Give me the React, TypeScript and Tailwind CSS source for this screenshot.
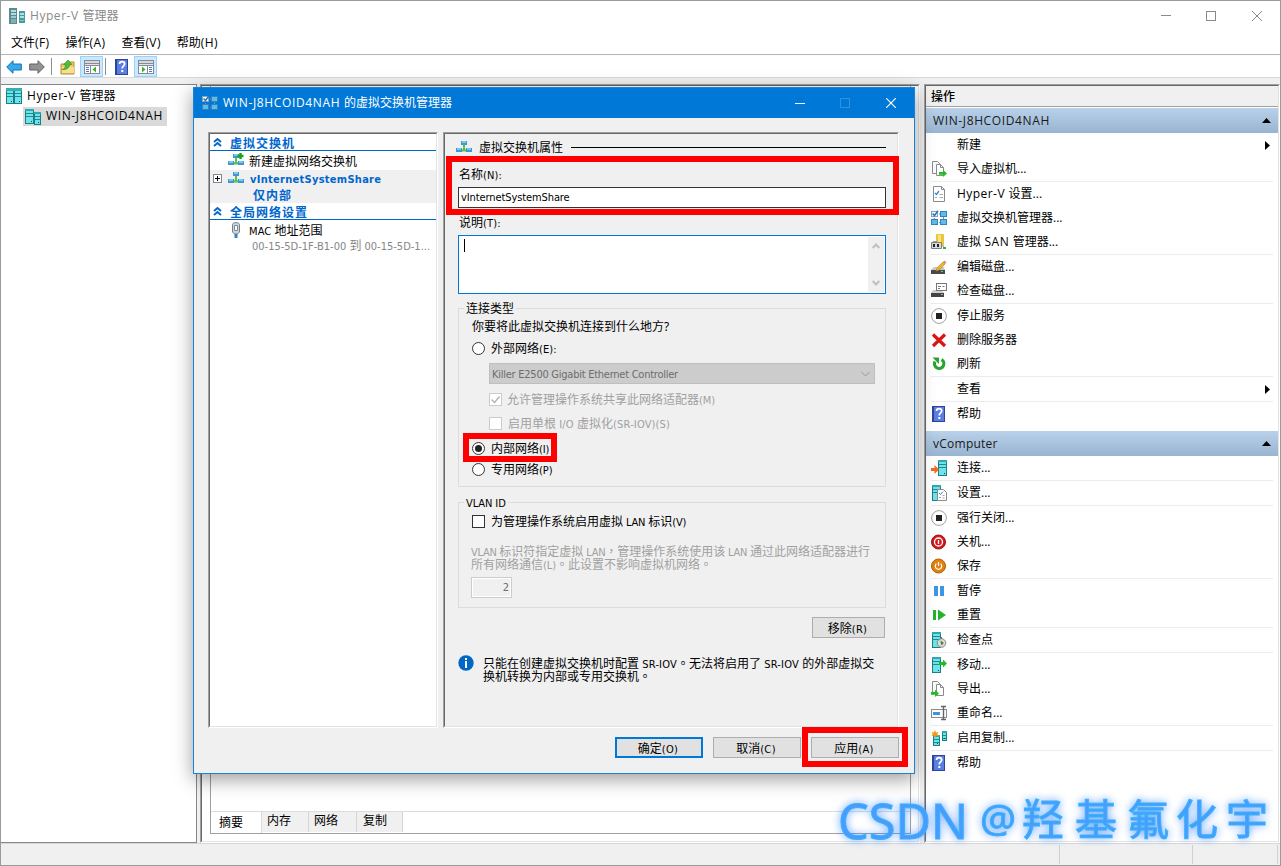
import type { ReactNode } from "react";

import clsx from "clsx";

interface TxtProps {
  children: string;
  className?: string;
  latin?: string;
}

const SEGOE = "font-['Open_Sans','Noto_Sans_CJK_SC',sans-serif] text-[12px]";
const TAHOMA = "font-['Noto_Sans','Noto_Sans_CJK_SC',sans-serif] text-[12px]";
const TAHOMA_LATIN = "font-['DejaVu_Sans_Condensed','DejaVu_Sans',sans-serif] font-stretch-condensed text-[11px]";

// Latin and CJK runs use different metrics, so each run is set on its own.
function Txt({ children, className, latin = "tracking-[0.45px]" }: TxtProps) {
  const runs = children.split(/([\x20-\x7e]+|[，。])/).filter(Boolean);
  return (
    <span className={clsx("whitespace-pre", className)}>
      {runs.map((run, i) => (
        <span
          key={i}
          className={clsx(
            /[A-Za-z0-9]/.test(run) && latin,
            /[，。]/.test(run) && "font-['Noto_Sans_CJK_TC',sans-serif]",
          )}
        >
          {run}
        </span>
      ))}
    </span>
  );
}

function DTxt({ children, className, latin = "tracking-[-0.1px]" }: TxtProps) {
  return (
    <Txt className={className} latin={clsx(TAHOMA_LATIN, latin)}>
      {children}
    </Txt>
  );
}

function Icon({ children, className }: { children: ReactNode; className?: string }) {
  return (
    <svg viewBox="0 0 16 16" className={clsx("h-4 w-4 shrink-0", className)} aria-hidden="true">
      {children}
    </svg>
  );
}

/* ---------- icons ---------- */

function ServerShape({ x, y, w, h }: { x: number; y: number; w: number; h: number }) {
  return (
    <g shapeRendering="crispEdges">
      <rect x={x} y={y} width={w} height={h} fill="#1d7f86" />
      <rect x={x + 1} y={y + 2} width={w - 2} height={h - 3} fill="#6fe3ea" />
      <rect x={x} y={y} width={w} height={2} fill="#2fa9b0" />
      <rect x={x + 1} y={y + 4} width={w - 2} height={1} fill="#1d8d95" />
      <rect x={x + 1} y={y + 7} width={w - 2} height={1} fill="#1d8d95" />
      <rect x={x + w - 3} y={y + h - 3} width={1} height={1} fill="#0c4f55" />
    </g>
  );
}

function HyperVIcon() {
  return (
    <Icon>
      <g shapeRendering="crispEdges">
        <rect x="0" y="0" width="8" height="16" fill="#5b8a90" />
        <rect x="2" y="2" width="5" height="2" fill="#b5dcdf" />
        <rect x="2" y="5" width="5" height="2" fill="#b5dcdf" />
        <rect x="2" y="8" width="5" height="2" fill="#9dcace" />
        <rect x="2" y="11" width="5" height="4" fill="#7fb0b5" />
        <rect x="10" y="3" width="6" height="12" fill="#4c9aa1" />
        <rect x="11" y="5" width="4" height="2" fill="#a9e3e6" />
        <rect x="11" y="8" width="4" height="2" fill="#a9e3e6" />
        <rect x="11" y="12" width="4" height="1" fill="#7fc4c9" />
      </g>
    </Icon>
  );
}

function RackIcon() {
  return (
    <Icon>
      <ServerShape x={0} y={1} w={8} h={15} />
      <ServerShape x={8} y={1} w={8} h={15} />
      <rect x="0" y="0" width="16" height="3" fill="#37aeb4" />
    </Icon>
  );
}

function HostIcon() {
  return (
    <Icon>
      <ServerShape x={0} y={0} w={9} h={15} />
      <ServerShape x={9} y={3} w={7} h={13} />
    </Icon>
  );
}

function ArrowIcon({ back }: { back?: boolean }) {
  return (
    <Icon>
      {back ? (
        <path d="M.7 8 7 1.700V5h8.300v6H7v3.300z" fill="#35aae8" stroke="#1b6fb5" />
      ) : (
        <path d="M15.300 8 9 1.700V5H.7v6H9v3.300z" fill="#929292" stroke="#626262" />
      )}
    </Icon>
  );
}

function FolderUpIcon() {
  return (
    <Icon>
      <path d="M1 5h6l1-2h6v12H1z" fill="#edcb68" stroke="#b88d2c" />
      <path d="M2 8h12v6H2z" fill="#f6df93" />
      <path d="M2 10.500c2.500-.5 3.500-2.500 3.500-5H3.500L8 1l4 4.500H9.500c0 3.500-3 5.500-7.500 5z" fill="#4fbe35" stroke="#2f8c22" strokeWidth=".6" />
    </Icon>
  );
}

function PaneIcon({ flip }: { flip?: boolean }) {
  return (
    <Icon>
      <g shapeRendering="crispEdges">
        <rect x="0" y="1" width="16" height="14" fill="#878c94" />
        <rect x="1" y="2" width="14" height="2" fill="#d5d9df" />
        <rect x="1" y="5" width="14" height="1" fill="#dfe3e9" />
        <rect x="1" y="7" width="14" height="7" fill="#fff" />
        <rect x={flip ? 9 : 6} y="7" width="1" height="7" fill="#878c94" />
        <rect x={flip ? 11 : 2} y="8" width="3" height="1" fill="#4d7bbd" />
        <rect x={flip ? 11 : 2} y="10" width="3" height="1" fill="#4d7bbd" />
        <rect x={flip ? 11 : 2} y="12" width="3" height="1" fill="#4d7bbd" />
      </g>
      {flip ? <path d="M4 7.500v6L7.500 10.500z" fill="#3faf2b" /> : <path d="M12 7.500v6L8.500 10.500z" fill="#3faf2b" />}
    </Icon>
  );
}

function HelpIcon() {
  return (
    <Icon>
      <rect x="1" y="0" width="13" height="16" fill="#2c449f" />
      <rect x="3" y="1" width="10" height="14" fill="#5b7fe0" />
      <path d="M5.500 5c0-3.300 5.200-3.300 5.200 0 0 2-2.500 2-2.500 4.500" fill="none" stroke="#fff" strokeWidth="1.700" />
      <rect x="7.300" y="11" width="2" height="2" fill="#fff" />
    </Icon>
  );
}

function SwitchManagerIcon() {
  return (
    <Icon>
      <path d="M8 4h3M3.500 8v4M8 12.500h3M12.500 7v4" stroke="#7e8c96" fill="none" />
      <rect x=".5" y="1.500" width="6" height="5" fill="#fff" stroke="#8ca2b0" />
      <path d="M1.500 3.500 3.500 5.500 7 .8" fill="none" stroke="#2277c8" strokeWidth="1.500" />
      <rect x="9.500" y="1.500" width="6" height="5" fill="#5bbcf0" stroke="#3583b5" />
      <rect x=".5" y="9.500" width="6" height="5" fill="#5bbcf0" stroke="#3583b5" />
      <rect x="9.500" y="9.500" width="6" height="5" fill="#5bbcf0" stroke="#3583b5" />
    </Icon>
  );
}

function SwitchIcon({ plus }: { plus?: boolean }) {
  return (
    <Icon>
      <path d="M7 5h2v4l3 1v1.500H4V10l3-1z" fill="#5cc04c" />
      <rect x="5" y="1" width="6" height="4" fill="#3f97d2" />
      <rect x="6" y="1" width="4" height="2" fill="#7cc8f2" />
      <rect x="0" y="8" width="6" height="4" fill="#3f97d2" />
      <rect x="1" y="8" width="4" height="2" fill="#7cc8f2" />
      <rect x="10" y="8" width="6" height="4" fill="#3f97d2" />
      <rect x="11" y="8" width="4" height="2" fill="#7cc8f2" />
      {plus && <path d="M12.500 0v6M9.500 3h6" stroke="#14a514" strokeWidth="2.400" />}
    </Icon>
  );
}

function NicIcon() {
  return (
    <Icon>
      <path d="M4.500 10V2.500c0-2.500 7-2.500 7 0V10l-2 2h-3z" fill="#cdd5dc" stroke="#75818c" />
      <path d="M6.500 3.500h3v5h-3z" fill="#fff" stroke="#7d8893" />
      <rect x="6.500" y="12" width="3" height="4" fill="#2f86c5" />
    </Icon>
  );
}

function PagesIcon({ out }: { out?: boolean }) {
  return (
    <Icon>
      <path d="M1.500.5h5l2.500 2.500v9.500H1.500z" fill="#fafafa" stroke="#8b8b8b" />
      <path d="M5.500 3.500h4l3 3v8h-7z" fill="#fff" stroke="#8b8b8b" />
      <path d="M9.500 3.500v3h3" fill="none" stroke="#8b8b8b" />
      {out ? (
        <path d="M0 11h4V8.700L8 12.500 4 16v-2.300H0z" fill="#22bd22" />
      ) : (
        <path d="M8 11h4V8.700L16 12.500 12 16v-2.300H8z" fill="#22bd22" />
      )}
    </Icon>
  );
}

function SettingsPageIcon() {
  return (
    <Icon>
      <path d="M2.500.5h8l3 3v12h-11z" fill="#fff" stroke="#8b8b8b" />
      <path d="M10.500.5v3h3" fill="none" stroke="#8b8b8b" />
      <path d="m4 7 1.500 1.500L8 5" fill="none" stroke="#3187d1" strokeWidth="1.300" />
      <path d="M8.500 8.500H12M8.500 11.500H12M4 11.500h2" stroke="#a8a8a8" />
    </Icon>
  );
}

function SanIcon() {
  return (
    <Icon>
      <rect x="5" y="0" width="8" height="12" rx="1" fill="#e9c73b" />
      <rect x="7" y="1" width="3" height="10" fill="#f7e383" />
      <path d="M2 7.500h4M4 7v2M11 11.500l4 3" stroke="#9a9a9a" />
      <rect x="0" y="8" width="11" height="7" rx="1" fill="#808080" />
      <rect x="1" y="9" width="9" height="5" fill="#d9d9d9" />
      <rect x="2" y="10" width="2" height="3" fill="#222" />
      <rect x="6" y="10" width="2" height="3" fill="#222" />
      <rect x="12" y="13" width="3" height="2" fill="#36ae36" />
    </Icon>
  );
}

function EditDiskIcon() {
  return (
    <Icon>
      <path d="M3 8h10l1 3H0z" fill="#c8c8c8" />
      <rect x="0" y="11" width="14" height="4" fill="#4a4a4a" />
      <rect x="10" y="12" width="2" height="1" fill="#5fd35f" />
      <path d="m5 12 1-3 6-6 2 2-6 6z" fill="#f0b429" stroke="#b27b14" strokeWidth=".6" />
      <path d="m12 3 1.500-1.500 2 2L14 5z" fill="#e58282" />
    </Icon>
  );
}

function InspectDiskIcon() {
  return (
    <Icon>
      <path d="M2 7h9l2 3H0z" fill="#cfcfcf" />
      <rect x="0" y="10" width="13" height="4" fill="#444" />
      <rect x="10" y="11" width="2" height="1" fill="#5fd35f" />
      <rect x="5.500" y=".5" width="10" height="7" fill="#fff" stroke="#777" />
      <path d="M7 3.500h3M11.500 3.500h2M7 5.500h2" stroke="#777" />
    </Icon>
  );
}

function StopIcon() {
  return (
    <Icon>
      <circle cx="8" cy="8" r="7.400" fill="#fff" stroke="#a0a0a0" />
      <rect x="5" y="5" width="6" height="6" fill="#222" />
    </Icon>
  );
}

function DeleteIcon() {
  return (
    <Icon>
      <path d="m2 2.500 12 11.500M14 2.500 2 14" stroke="#dc1414" strokeWidth="3.200" />
    </Icon>
  );
}

function RefreshIcon() {
  return (
    <Icon>
      <path d="M10.500 3.600A4.700 4.700 0 1 1 4 5.500" fill="none" stroke="#27a52f" strokeWidth="3.200" />
      <path d="M1.500 1.500h6.500V8z" fill="#27a52f" />
    </Icon>
  );
}

function ConnectIcon() {
  return (
    <Icon>
      <ServerShape x={7} y={0} w={9} h={16} />
      <path d="M0 8h3.500V5L8 9.500 3.500 14v-3H0z" fill="#f26a1b" />
    </Icon>
  );
}

function VmSettingsIcon() {
  return (
    <Icon>
      <ServerShape x={1} y={0} w={9} h={16} />
      <path d="M6.500 4.500h6l3 3v8h-9z" fill="#fff" stroke="#8b8b8b" />
      <path d="m8 8 1.500 1.500L12 6.500" fill="none" stroke="#3187d1" />
      <path d="M8 12.500h2M11.500 10.500h2M11.500 13h2" stroke="#a8a8a8" />
    </Icon>
  );
}

function ShutdownIcon() {
  return (
    <Icon>
      <circle cx="7.500" cy="8" r="7" fill="#d41a1a" stroke="#9b1010" />
      <circle cx="7.500" cy="8" r="4" fill="none" stroke="#fff" strokeWidth="1.300" />
      <path d="M7.500 6v4" stroke="#fff" strokeWidth="1.300" />
    </Icon>
  );
}

function SaveIcon() {
  return (
    <Icon>
      <circle cx="7.500" cy="8" r="7" fill="#e0820f" stroke="#ac600a" />
      <path d="M5.300 5.800a3.200 3.200 0 1 0 4.400 0M7.500 4v4" fill="none" stroke="#fff" strokeWidth="1.200" />
    </Icon>
  );
}

function PauseIcon() {
  return (
    <Icon>
      <rect x="3" y="3" width="4" height="10" fill="#3b97e3" />
      <rect x="9" y="3" width="4" height="10" fill="#3b97e3" />
    </Icon>
  );
}

function ResetIcon() {
  return (
    <Icon>
      <rect x="2" y="3" width="3" height="10" fill="#22b52c" />
      <path d="m7 2.500 8 5.500-8 5.500z" fill="#22b52c" />
    </Icon>
  );
}

function CheckpointIcon() {
  return (
    <Icon>
      <ServerShape x={1} y={0} w={9} h={16} />
      <circle cx="10.500" cy="11" r="4.300" fill="#d8d8d8" stroke="#8a8a8a" />
      <path d="M10.500 5v2" stroke="#777" />
      <path d="M9.500 8.500 13 11l-3 1.500z" fill="#2a9a34" />
      <circle cx="11" cy="12" r=".8" fill="#c22" />
    </Icon>
  );
}

function MoveIcon() {
  return (
    <Icon>
      <ServerShape x={1} y={0} w={9} h={16} />
      <path d="M8 5h4V2.500L16 6.500 12 10.500V8H8z" fill="#22bd22" />
    </Icon>
  );
}

function RenameIcon() {
  return (
    <Icon>
      <rect x=".5" y="4.500" width="15" height="8" fill="#fff" stroke="#8b8b8b" />
      <rect x="2" y="7" width="7" height="3" fill="#3b97e3" />
      <path d="M12.500 1v14M10 1.500h5M10 14.500h5" stroke="#666" strokeWidth="1.400" fill="none" />
    </Icon>
  );
}

function ReplicateIcon() {
  return (
    <Icon>
      <ServerShape x={2} y={5} w={7} h={11} />
      <ServerShape x={11} y={1} w={5} h={10} />
      <path d="m4 0 1 2.500L7.500 2 6.300 4l1.500 2-2.600-.2L4 8l-1-2.400L.5 6l1.300-2L.5 2 3 2.500z" fill="#f39c12" />
    </Icon>
  );
}

/* ---------- actions pane ---------- */

interface Action {
  label: string;
  icon?: ReactNode;
  submenu?: boolean;
}

const HOST_ACTIONS: Action[][] = [
  [
    { label: "新建", submenu: true },
    { label: "导入虚拟机...", icon: <PagesIcon /> },
  ],
  [
    { label: "Hyper-V 设置...", icon: <SettingsPageIcon /> },
    { label: "虚拟交换机管理器...", icon: <SwitchManagerIcon /> },
    { label: "虚拟 SAN 管理器...", icon: <SanIcon /> },
  ],
  [
    { label: "编辑磁盘...", icon: <EditDiskIcon /> },
    { label: "检查磁盘...", icon: <InspectDiskIcon /> },
  ],
  [
    { label: "停止服务", icon: <StopIcon /> },
    { label: "删除服务器", icon: <DeleteIcon /> },
    { label: "刷新", icon: <RefreshIcon /> },
  ],
  [{ label: "查看", submenu: true }],
  [{ label: "帮助", icon: <HelpIcon /> }],
];

const VM_ACTIONS: Action[][] = [
  [{ label: "连接...", icon: <ConnectIcon /> }],
  [{ label: "设置...", icon: <VmSettingsIcon /> }],
  [
    { label: "强行关闭...", icon: <StopIcon /> },
    { label: "关机...", icon: <ShutdownIcon /> },
    { label: "保存", icon: <SaveIcon /> },
  ],
  [
    { label: "暂停", icon: <PauseIcon /> },
    { label: "重置", icon: <ResetIcon /> },
  ],
  [{ label: "检查点", icon: <CheckpointIcon /> }],
  [
    { label: "移动...", icon: <MoveIcon /> },
    { label: "导出...", icon: <PagesIcon out /> },
    { label: "重命名...", icon: <RenameIcon /> },
  ],
  [{ label: "启用复制...", icon: <ReplicateIcon /> }],
  [{ label: "帮助", icon: <HelpIcon /> }],
];

function ActionBand({ title, latin }: { title: string; latin: string }) {
  return (
    <div className="flex h-[25px] items-center justify-between bg-linear-to-b from-[#b9d1ea] to-[#99b4d1] pr-[7px] pl-[7px]">
      <Txt latin={latin} className="text-[#1a1a1a]">{title}</Txt>
      <svg viewBox="0 0 9 5" className="h-[5px] w-[9px]">
        <path d="M4.500 0 9 5H0z" />
      </svg>
    </div>
  );
}

function ActionGroups({ groups }: { groups: Action[][] }) {
  return (
    <>
      {groups.map((group, i) => (
        <div key={i}>
          {i > 0 && <div className="mr-[5px] ml-[5px] h-px bg-[#ececec]" />}
          {group.map((action) => (
            <div key={action.label} className="flex h-6 items-center pr-2 pl-[5px]">
              <div className="mr-[10px] h-4 w-4">{action.icon}</div>
              <Txt className="flex-1">{action.label}</Txt>
              {action.submenu && (
                <svg viewBox="0 0 5 9" className="h-[9px] w-[5px]">
                  <path d="M0 0 5 4.500 0 9z" />
                </svg>
              )}
            </div>
          ))}
        </div>
      ))}
    </>
  );
}

/* ---------- dialog ---------- */

function Radio({ checked }: { checked?: boolean }) {
  return (
    <span className="flex h-[13px] w-[13px] shrink-0 items-center justify-center rounded-full border border-[#333] bg-white">
      {checked && <span className="h-[7px] w-[7px] rounded-full bg-[#222]" />}
    </span>
  );
}

function Check({ disabled, checked }: { disabled?: boolean; checked?: boolean }) {
  return (
    <span
      className={clsx(
        "flex h-[13px] w-[13px] shrink-0 items-center justify-center border bg-white",
        disabled ? "border-[#ccc]" : "border-[#333]",
      )}
    >
      {checked && (
        <svg viewBox="0 0 11 11" className="h-[11px] w-[11px]">
          <path d="m1.500 5.500 3 3 5-6" fill="none" stroke="#b0b0b0" strokeWidth="1.300" />
        </svg>
      )}
    </span>
  );
}

function DialogButton({ label, primary, className }: { label: string; primary?: boolean; className?: string }) {
  return (
    <button
      type="button"
      className={clsx(
        "flex h-[21px] items-center justify-center bg-[#e1e1e1] pr-[2px] leading-none",
        primary ? "border-2 border-[#0078d7]" : "border border-[#adadad]",
        className,
      )}
    >
      <DTxt className="pt-[2px]" latin="tracking-[0.35px]">{label}</DTxt>
    </button>
  );
}

function TreeHeader({ title }: { title: string }) {
  return (
    <div className="flex h-[17px] items-center border-b border-[#0066cc] pl-[2px] font-bold text-[#0066cc]">
      <svg viewBox="0 0 9 9" className="mr-[8px] ml-px h-[9px] w-[9px]">
        <path d="m1 4 3.500-3L8 4M1 8l3.500-3L8 8" fill="none" stroke="#0066cc" strokeWidth="1.900" />
      </svg>
      <DTxt className="pt-[3px] tracking-[1px]">{title}</DTxt>
    </div>
  );
}

function SwitchTree() {
  return (
    <div className="h-[596px] w-[230px] border border-t-[#a0a0a0] border-r-white border-b-white border-l-[#a0a0a0]">
      <div className="h-full overflow-hidden border border-t-[#696969] border-r-[#e3e3e3] border-b-[#e3e3e3] border-l-[#696969] bg-white">
        <TreeHeader title="虚拟交换机" />
        <div className="flex h-[19px] items-center pl-[18px]">
          <SwitchIcon plus />
          <DTxt className="ml-[5px] pt-[2px]">新建虚拟网络交换机</DTxt>
        </div>
        <div className="h-[33px] bg-[#f0f0f0]">
          <div className="flex h-[17px] items-center pl-[3px]">
            <svg viewBox="0 0 9 9" className="mr-[6px] h-[9px] w-[9px]" shapeRendering="crispEdges">
              <rect x=".5" y=".5" width="8" height="8" fill="#fff" stroke="#7f8790" />
              <path d="M2 4.500h5M4.500 2v5" stroke="#000" />
            </svg>
            <SwitchIcon />
            <DTxt className="ml-[6px] pt-px font-bold text-[#0066cc]" latin="tracking-[0.28px]">
              vInternetSystemShare
            </DTxt>
          </div>
          <div className="flex h-[14px] items-center pl-[43px] font-bold text-[#0066cc]">
            <DTxt className="pt-[3px] tracking-[1px]">仅内部</DTxt>
          </div>
        </div>
        <TreeHeader title="全局网络设置" />
        <div className="flex h-[19px] items-center pl-[18px]">
          <NicIcon />
          <DTxt className="ml-[5px] pt-[3px]" latin="tracking-[0.1px]">MAC 地址范围</DTxt>
        </div>
        <div className="flex h-[13px] items-center pl-[42px] text-[#868686]">
          <DTxt className="pt-px" latin="tracking-[0px]">00-15-5D-1F-B1-00 到 00-15-5D-1...</DTxt>
        </div>
      </div>
    </div>
  );
}

function GroupBox({ title, className, children }: { title: string; className?: string; children: ReactNode }) {
  return (
    <div className={clsx("relative ml-[13px] w-[428px] border border-[#dcdcdc]", className)}>
      <div className="absolute -top-2 left-[5px] h-4 bg-[#f0f0f0] px-[2px] leading-4">
        <DTxt>{title}</DTxt>
      </div>
      {children}
    </div>
  );
}

function SwitchProperties() {
  return (
    <div className="h-[596px] w-[456px] border border-t-[#a0a0a0] border-r-white border-b-white border-l-[#a0a0a0]">
      <div className="relative h-full border border-t-[#696969] border-r-[#e3e3e3] border-b-[#e3e3e3] border-l-[#696969]">
        <div className="flex h-[27px] items-center pr-[11px] pl-[11px]">
          <SwitchIcon />
          <DTxt className="mr-[8px] ml-[7px]">虚拟交换机属性</DTxt>
          <div className="h-px flex-1 bg-black" />
        </div>
        <div className="flex h-[26px] items-center pl-[14px]">
          <DTxt className="pt-[2px]" latin="tracking-[0.15px]">名称(N):</DTxt>
        </div>
        <div className="ml-[13px] flex h-[21px] w-[428px] items-center border border-[#333] bg-white pl-[2px]">
          <DTxt>vInternetSystemShare</DTxt>
        </div>
        <div className="flex h-[27px] items-center pl-[14px]">
          <DTxt className="pt-[3px]" latin="tracking-[0.15px]">说明(T):</DTxt>
        </div>
        <div className="ml-[13px] flex h-[59px] w-[428px] justify-between border border-[#0078d7] bg-white p-px">
          <div className="mt-[2px] ml-[4px] h-[13px] w-px bg-black" />
          <div className="flex w-4 flex-col items-center justify-between bg-[#f0f0f0] py-[6px]">
            <svg viewBox="0 0 8 6" className="h-[6px] w-2">
              <path d="m.7 5 3.300-3.500L7.300 5" fill="none" stroke="#bfbfbf" strokeWidth="2" />
            </svg>
            <svg viewBox="0 0 8 6" className="h-[6px] w-2">
              <path d="m.7 1 3.300 3.500L7.300 1" fill="none" stroke="#bfbfbf" strokeWidth="2" />
            </svg>
          </div>
        </div>
        <GroupBox title="连接类型" className="mt-[14px] h-[179px] pt-[9px] pl-[13px]">
          <div className="flex h-[18px] items-center">
            <DTxt>你要将此虚拟交换机连接到什么地方?</DTxt>
          </div>
          <div className="flex h-[24px] items-center gap-[6px]">
            <Radio />
            <DTxt className="pt-[2px]" latin="tracking-[0.1px]">外部网络(E):</DTxt>
          </div>
          <div className="mt-[3px] ml-[17px] flex h-[21px] w-[386px] items-center justify-between border border-[#bfbfbf] bg-[#ccc] pr-[4px] pl-[2px] text-[#6d6d6d]">
            <DTxt className="pt-px" latin="tracking-[-0.25px]">Killer E2500 Gigabit Ethernet Controller</DTxt>
            <svg viewBox="0 0 9 6" className="h-[6px] w-[9px]">
              <path d="m.5 1 4 4 4-4" fill="none" stroke="#9a9a9a" />
            </svg>
          </div>
          <div className="mt-[3px] ml-[17px] flex h-6 items-center gap-[5px] text-[#a0a0a0]">
            <Check disabled checked />
            <DTxt className="pt-[2px]">允许管理操作系统共享此网络适配器(M)</DTxt>
          </div>
          <div className="ml-[17px] flex h-6 items-center gap-[6px] text-[#a0a0a0]">
            <Check disabled />
            <DTxt className="pt-[2px]" latin="tracking-[0.15px]">启用单根 I/O 虚拟化(SR-IOV)(S)</DTxt>
          </div>
          <div className="mt-px flex h-6 items-center gap-[6px]">
            <Radio checked />
            <DTxt className="pt-[2px]">内部网络(I)</DTxt>
          </div>
          <div className="flex h-[18px] items-center gap-[6px]">
            <Radio />
            <DTxt className="pt-[2px]">专用网络(P)</DTxt>
          </div>
        </GroupBox>
        <GroupBox title="VLAN ID" className="mt-[15px] h-[106px] pt-[9px] pl-[13px]">
          <div className="flex h-[19px] items-center gap-[6px]">
            <Check />
            <DTxt className="pt-[2px]" latin="tracking-[-0.2px]">为管理操作系统启用虚拟 LAN 标识(V)</DTxt>
          </div>
          <div className="mt-[14px] -ml-px flex flex-col text-[#a0a0a0]">
            <div className="flex h-[13px] items-center">
              <DTxt latin="tracking-[-0.3px]">VLAN 标识符指定虚拟 LAN，管理操作系统使用该 LAN 通过此网络适配器进行</DTxt>
            </div>
            <div className="flex h-[13px] items-center">
              <DTxt>所有网络通信(L)。此设置不影响虚拟机网络。</DTxt>
            </div>
          </div>
          <div className="mt-[6px] -ml-px flex h-[21px] w-[41px] items-center justify-end border border-[#ccc] bg-[#f0f0f0] pr-[2px] text-[#6d6d6d] shadow-[inset_0_0_0_1px_#fff]">
            <DTxt>2</DTxt>
          </div>
        </GroupBox>
        <DialogButton label="移除(R)" className="mt-[9px] ml-[367px] w-[73px]" />
        <div className="mt-[17px] ml-[13px] flex gap-[9px]">
          <Icon>
            <circle cx="8" cy="8" r="7.700" fill="#0067c5" />
            <rect x="7" y="3" width="2" height="2" fill="#fff" />
            <rect x="7" y="6" width="2" height="7" fill="#fff" />
          </Icon>
          <div className="mt-[2px] flex flex-col">
            <div className="flex h-[13px] items-center">
              <DTxt latin="tracking-[0.17px]">只能在创建虚拟交换机时配置 SR-IOV。无法将启用了 SR-IOV 的外部虚拟交</DTxt>
            </div>
            <div className="flex h-[13px] items-center">
              <DTxt>换机转换为内部或专用交换机。</DTxt>
            </div>
          </div>
        </div>
        {/* highlight frames */}
        <div className="absolute top-[22px] left-px h-[59px] w-[453px] border-6 border-[#f00]" />
        <div className="absolute top-[299px] left-[18px] h-[29px] w-[94px] border-6 border-[#f00]" />
      </div>
    </div>
  );
}

function SwitchDialog() {
  return (
    <div
      className={clsx(
        "absolute top-[87px] left-[193px] h-[687px] w-[722px] border border-[#1883d7] bg-[#f0f0f0] leading-[14px] shadow-[0_5px_18px_rgba(0,0,0,0.4)]",
        TAHOMA,
      )}
    >
      <div className={clsx("flex h-[30px] items-center bg-[#0078d7] pl-2 text-white", SEGOE)}>
        <SwitchManagerIcon />
        <Txt className="ml-[5px] flex-1" latin="tracking-[0.65px]">WIN-J8HCOID4NAH 的虚拟交换机管理器</Txt>
        <div className="mr-[35px] h-px w-[10px] bg-white" />
        <div className="mr-[36px] h-[10px] w-[10px] border border-[#2f93e2]" />
        <svg viewBox="0 0 10 10" className="mr-[18px] h-[10px] w-[10px]">
          <path d="m0 0 10 10M10 0 0 10" stroke="#fff" strokeWidth="1.200" />
        </svg>
      </div>
      <div className="mt-[14px] ml-[14px] flex gap-[5px]">
        <SwitchTree />
        <SwitchProperties />
      </div>
      <div className="mt-[9px] ml-[421px] flex gap-[10px]">
        <DialogButton label="确定(O)" primary className="w-[88px]" />
        <DialogButton label="取消(C)" className="w-[88px]" />
        <div className="relative">
          <DialogButton label="应用(A)" className="w-[88px]" />
          <div className="absolute -top-[10px] -left-[9px] h-[40px] w-[106px] border-6 border-[#f00]" />
        </div>
      </div>
    </div>
  );
}

/* ---------- main window ---------- */

function SummaryTabs() {
  return (
    <div className="flex h-[22px] border-t border-[#dcdcdc]">
      <div className="w-[51px] border-r border-[#dcdcdc] pl-[8px] leading-[21px]">摘要</div>
      <div className="h-5 w-[47px] border-r border-[#d5d5d5] bg-[#f0f0f0] pl-[5px] leading-[18px]">内存</div>
      <div className="h-5 w-[48px] border-r border-[#d5d5d5] bg-[#f0f0f0] pl-[5px] leading-[18px]">网络</div>
      <div className="h-5 w-[46px] border-r border-[#d5d5d5] bg-[#f0f0f0] pl-[6px] leading-[18px]">复制</div>
    </div>
  );
}

function Watermark() {
  return (
    <svg
      viewBox="0 0 461 86"
      className="absolute top-[780px] left-[820px] h-[86px] w-[461px] font-['Noto_Sans','Noto_Sans_CJK_SC',sans-serif] drop-shadow-[0_0_4px_rgba(50,130,255,0.75)]"
    >
      <g fill="#4a9bff" stroke="#37b4f8" strokeWidth="1">
        <text x="18" y="59" fontSize="50" textLength="130" lengthAdjust="spacingAndGlyphs">CSDN</text>
        <text x="160" y="52" fontSize="39" textLength="36" lengthAdjust="spacingAndGlyphs">@</text>
        <g fontSize="42">
          <text x="202" y="55">羟</text>
          <text x="255" y="55">基</text>
          <text x="307" y="55">氟</text>
          <text x="356" y="55">化</text>
          <text x="406" y="55">宇</text>
        </g>
      </g>
    </svg>
  );
}

export default function App() {
  return (
    <div
      className={clsx(
        "relative flex h-[866px] w-[1281px] flex-col overflow-hidden border border-[#9a9a9a] bg-[#f0f0f0] leading-4 text-black",
        SEGOE,
      )}
    >
      <header className="bg-white">
        <div className="flex h-[29px] items-center pl-2 text-[#8a8a8a]">
          <HyperVIcon />
          <Txt className="ml-[5px] flex-1" latin="tracking-[0.55px]">Hyper-V 管理器</Txt>
          <div className="mr-[35px] h-px w-[10px] bg-[#8a8a8a]" />
          <div className="mr-[36px] h-[10px] w-[10px] border border-[#8a8a8a]" />
          <svg viewBox="0 0 10 10" className="mr-[18px] h-[10px] w-[10px]">
            <path d="m0 0 10 10M10 0 0 10" stroke="#8a8a8a" />
          </svg>
        </div>
        <nav className="flex h-6 items-center gap-4 pt-[2px] pl-[10px]">
          {["文件(F)", "操作(A)", "查看(V)", "帮助(H)"].map((item) => (
            <Txt key={item} latin="tracking-[0.4px]">{item}</Txt>
          ))}
        </nav>
        <div className="flex h-[24px] items-center border-t border-b border-t-[#b4b4b4] border-b-[#d9d9d9] pt-px pl-[5px]">
          <ArrowIcon back />
          <div className="w-[7px]" />
          <ArrowIcon />
          <div className="mr-2 ml-[6px] h-[17px] w-px bg-[#8d8d8d]" />
          <FolderUpIcon className="mt-px" />
          <div className="ml-1 flex h-[21px] w-[23px] items-center justify-center border border-[#99d1ff] bg-[#cce8ff]">
            <PaneIcon />
          </div>
          <div className="ml-[2px] h-[17px] w-px bg-[#8d8d8d]" />
          <div className="w-2" />
          <HelpIcon />
          <div className="ml-1 flex h-[21px] w-[23px] items-center justify-center border border-[#99d1ff] bg-[#cce8ff]">
            <PaneIcon flip />
          </div>
        </div>
      </header>

      <main className="flex h-[765px] pt-[6px]">
        <div className="mr-[3px] h-[759px] w-[196px] shrink-0 border border-l-0 border-[#828790] bg-white">
          <div className="flex h-[22px] items-center pl-[5px]">
            <RackIcon />
            <Txt className="ml-[5px]" latin="tracking-[0.55px]">Hyper-V 管理器</Txt>
          </div>
          <div className="ml-[22px] flex h-[19px] w-[144px] items-center bg-[#d9d9d9] pl-[2px]">
            <HostIcon />
            <Txt className="ml-[5px] pb-px" latin="tracking-[0.62px]">WIN-J8HCOID4NAH</Txt>
          </div>
        </div>

        <div className="mr-1 h-[759px] w-[720px] shrink-0 border border-t-[#a0a0a0] border-r-white border-b-white border-l-[#a0a0a0]">
          <div className="flex h-full flex-col border border-t-[#696969] border-r-[#e3e3e3] border-b-[#e3e3e3] border-l-[#696969] bg-white pr-[7px] pb-[7px] pl-[8px]">
            <div className="flex flex-1 flex-col justify-end border-x border-b border-[#a0a0a0]">
              <SummaryTabs />
            </div>
          </div>
        </div>

        <div className="h-[759px] w-[356px] shrink-0 border border-t-[#a0a0a0] border-r-white border-b-white border-l-[#a0a0a0]">
          <div className="h-full border border-t-[#696969] border-r-[#e3e3e3] border-b-[#e3e3e3] border-l-[#696969] bg-white">
            <div className="mb-px flex h-[21px] items-center border-b border-[#a0a0a0] bg-[#f0f0f0] pt-px pl-[5px] font-medium">
              操作
            </div>
            <ActionBand title="WIN-J8HCOID4NAH" latin="tracking-[0.62px]" />
            <ActionGroups groups={HOST_ACTIONS} />
            <div className="h-[5px]" />
            <ActionBand title="vComputer" latin="tracking-[0.25px]" />
            <ActionGroups groups={VM_ACTIONS} />
          </div>
        </div>
      </main>

      <footer className="flex h-[22px] justify-end border-t border-[#d7d7d7] py-px">
        <div className="w-[133px] border-l border-[#d0d0d0]" />
        <div className="w-[86px] border-x border-[#d0d0d0]" />
        <div className="w-[2px]" />
      </footer>

      <div className="absolute -top-px -left-px">
        <SwitchDialog />
        <Watermark />
      </div>
    </div>
  );
}
